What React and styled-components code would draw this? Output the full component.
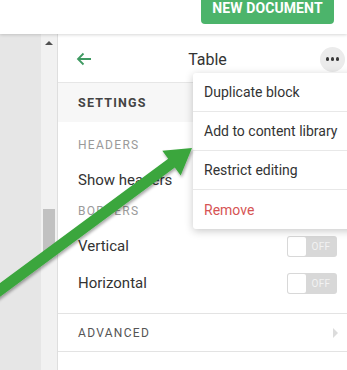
import styled, { createGlobalStyle } from "styled-components";

const GlobalStyle = createGlobalStyle`
  html, body {
    margin: 0;
    padding: 0;
    background: #fff;
    overflow: hidden;
  }
  * { box-sizing: border-box; }
`;

const App = () => {
  return (
    <Page>
      <GlobalStyle />
      <TopBar>
        <NewDocButton>NEW DOCUMENT</NewDocButton>
      </TopBar>
      <Body>
        <Sidebar />
        <Scrollbar>
          <ScrollUp />
          <Thumb />
        </Scrollbar>
        <Panel>
          <PanelHeader>
            <BackButton>
              <svg width="16" height="14" viewBox="0 0 16 14">
                <path d="M15 7H2M7.5 1.5L2 7l5.5 5.5" fill="none" stroke="#3f9a62" strokeWidth="1.8" />
              </svg>
            </BackButton>
            <Title>Table</Title>
            <DotsButton>
              <Dot />
              <Dot />
              <Dot />
            </DotsButton>
          </PanelHeader>
          <TabBar>SETTINGS</TabBar>
          <Row $h={46}>
            <Label>HEADERS</Label>
          </Row>
          <Row $h={24}>
            <Text>Show headers</Text>
          </Row>
          <Row $h={38}>
            <Label>BORDERS</Label>
          </Row>
          <Row $h={32}>
            <Text>Vertical</Text>
            <Toggle />
          </Row>
          <Row $h={42}>
            <Text>Horizontal</Text>
            <Toggle />
          </Row>
          <Spacer $h={9} />
          <Collapse>
            <Label $dark>ADVANCED</Label>
            <Chevron />
          </Collapse>
        </Panel>
      </Body>
      <Menu>
        <MenuItem>Duplicate block</MenuItem>
        <MenuItem>Add to content library</MenuItem>
        <MenuItem>Restrict editing</MenuItem>
        <MenuItem $danger>Remove</MenuItem>
      </Menu>
      <ArrowOverlay width="347" height="370" viewBox="0 0 347 370">
        <defs>
          <filter id="sh" x="-10%" y="-10%" width="130%" height="130%">
            <feDropShadow dx="1" dy="2" stdDeviation="1.5" floodColor="#000" floodOpacity="0.35" />
          </filter>
        </defs>
        <polygon
          points="192,148 180.7,175.6 174.8,167.6 -16.7,309.2 -23.3,300.4 168.2,158.8 162.3,150.8"
          fill="#3aa63d"
          filter="url(#sh)"
        />
      </ArrowOverlay>
    </Page>
  );
};

export default App;

const Toggle = () => (
  <ToggleBox>
    <Knob />
    <OffText>OFF</OffText>
  </ToggleBox>
);

const Page = styled.div`
  position: relative;
  width: 347px;
  height: 370px;
  overflow: hidden;
  font-family: Roboto, "Liberation Sans", sans-serif;
  display: flex;
  flex-direction: column;
`;

const TopBar = styled.header`
  height: 34px;
  flex: none;
  display: flex;
  justify-content: flex-end;
  align-items: flex-start;
  padding-right: 13px;
  background: #fff;
  box-shadow: 0 1px 3px rgba(0, 0, 0, 0.16);
  position: relative;
  z-index: 2;
`;

const NewDocButton = styled.button`
  width: 133px;
  height: 24px;
  border: none;
  border-radius: 0 0 4px 4px;
  background: #4cb46b;
  color: #fff;
  font-family: Roboto, "Liberation Sans", sans-serif;
  font-weight: 700;
  font-size: 14px;
  letter-spacing: 0.1px;
  line-height: 16px;
  padding: 0 0 8px;
`;

const Body = styled.div`
  flex: 1;
  display: flex;
  min-height: 0;
`;

const Sidebar = styled.div`
  width: 41px;
  background: #e6e6e6;
`;

const Scrollbar = styled.div`
  width: 17px;
  background: #f1f1f1;
  border-right: 1px solid #dedede;
  display: flex;
  flex-direction: column;
  align-items: center;
  padding-top: 7px;
`;

const ScrollUp = styled.div`
  width: 0;
  height: 0;
  border-left: 4px solid transparent;
  border-right: 4px solid transparent;
  border-bottom: 4px solid #505050;
`;

const Thumb = styled.div`
  width: 12px;
  height: 46px;
  margin-top: 164px;
  background: #c1c1c1;
`;

const Panel = styled.section`
  flex: 1;
  display: flex;
  flex-direction: column;
  background: #fff;
`;

const PanelHeader = styled.div`
  height: 49px;
  flex: none;
  display: grid;
  grid-template-columns: 40px 1fr 40px;
  align-items: center;
  padding: 0 2px 0 18px;
  border-bottom: 1px solid #e6e6e6;
`;

const BackButton = styled.div`
  display: flex;
  align-items: center;
  padding-top: 2px;
`;

const Title = styled.div`
  text-align: center;
  font-size: 16px;
  color: #333;
  padding-right: 6px;
  padding-top: 3px;
`;

const DotsButton = styled.div`
  justify-self: end;
  width: 25px;
  height: 25px;
  border-radius: 50%;
  background: #ebebeb;
  display: flex;
  align-items: center;
  justify-content: center;
  gap: 1.5px;
  margin-top: 2px;
`;

const Dot = styled.span`
  width: 3.5px;
  height: 3.5px;
  border-radius: 50%;
  background: #3a3a3a;
`;

const TabBar = styled.div`
  height: 39px;
  flex: none;
  display: flex;
  align-items: center;
  padding-left: 20px;
  background: #f7f7f7;
  font-size: 12.5px;
  font-weight: 700;
  letter-spacing: 1.2px;
  color: #444;
`;

const Row = styled.div`
  height: ${(p) => p.$h}px;
  flex: none;
  display: flex;
  align-items: center;
  justify-content: space-between;
  padding: 0 10px 0 20px;
`;

const Spacer = styled.div`
  height: ${(p) => p.$h}px;
  flex: none;
`;

const Label = styled.span`
  font-size: 12px;
  letter-spacing: 1.3px;
  color: ${(p) => (p.$dark ? "#555" : "#9a9a9a")};
`;

const Text = styled.span`
  font-size: 15px;
  color: #333;
`;

const ToggleBox = styled.div`
  width: 50px;
  height: 21px;
  border-radius: 3px;
  background: #d8d8d8;
  display: flex;
  align-items: center;
  padding: 1px;
`;

const Knob = styled.span`
  width: 18px;
  height: 19px;
  border-radius: 2px;
  background: #fff;
`;

const OffText = styled.span`
  flex: 1;
  text-align: center;
  font-size: 10px;
  color: #f2f2f2;
  letter-spacing: 0.3px;
`;

const Collapse = styled.div`
  height: 39px;
  flex: none;
  display: flex;
  align-items: center;
  justify-content: space-between;
  padding: 0 9px 0 20px;
  border-top: 1px solid #e3e3e3;
  border-bottom: 1px solid #e3e3e3;
`;

const Chevron = styled.span`
  width: 0;
  height: 0;
  border-top: 5px solid transparent;
  border-bottom: 5px solid transparent;
  border-left: 5px solid #dcdcdc;
`;

const Menu = styled.ul`
  position: absolute;
  left: 193px;
  top: 73px;
  width: 170px;
  margin: 0;
  padding: 0;
  list-style: none;
  background: #fff;
  border-radius: 3px;
  box-shadow: 0 2px 8px rgba(0, 0, 0, 0.22);
  z-index: 3;
`;

const MenuItem = styled.li`
  height: 39px;
  display: flex;
  align-items: center;
  padding-left: 11px;
  font-size: 14px;
  color: ${(p) => (p.$danger ? "#d65454" : "#333")};
  border-bottom: 1px solid #e8e8e8;
  &:last-child {
    border-bottom: none;
  }
`;

const ArrowOverlay = styled.svg`
  position: absolute;
  left: 0;
  top: 0;
  z-index: 4;
  pointer-events: none;
`;
